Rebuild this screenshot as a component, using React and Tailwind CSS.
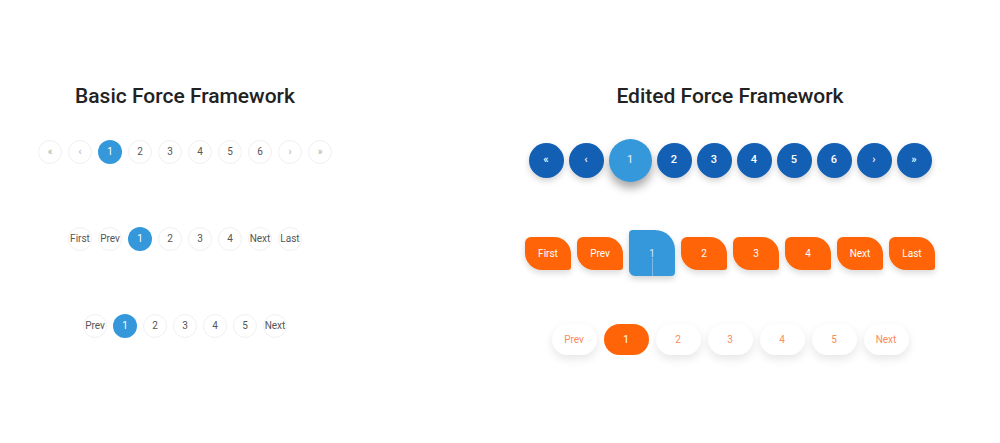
import React from 'react'

const font = { fontFamily: 'Roboto, "Liberation Sans", sans-serif' }

const BasicItem = ({ label, active, dim }) => (
  <div
    className={
      'w-[24px] h-[24px] rounded-full flex items-center justify-center text-[10px] leading-none whitespace-nowrap ' +
      (active
        ? 'bg-[#3498db] text-white'
        : 'border border-[#f0f0f0] bg-white ' + (dim ? 'text-[#aaa]' : 'text-[#555]'))
    }
  >
    {label}
  </div>
)

const BasicRow = ({ items, active }) => (
  <div className="flex items-center gap-[6px]">
    {items.map((it) => (
      <BasicItem key={it} label={it} active={it === active} dim={['«', '‹', '›', '»'].includes(it)} />
    ))}
  </div>
)

const BlueRow = () => {
  const items = ['«', '‹', '1', '2', '3', '4', '5', '6', '›', '»']
  return (
    <div className="flex items-center gap-[5px] h-[43px]">
      {items.map((it) =>
        it === '1' ? (
          <div
            key={it}
            className="w-[43px] h-[43px] rounded-full bg-[#3498db] text-[#e8f2fb] text-[11px] flex items-center justify-center shadow-[0_6px_10px_rgba(0,0,0,0.35)]"
          >
            {it}
          </div>
        ) : (
          <div
            key={it}
            className="w-[35px] h-[35px] rounded-full bg-[#135fb4] text-white text-[11px] font-medium flex items-center justify-center shadow-[0_3px_6px_rgba(0,0,0,0.18)]"
          >
            {it}
          </div>
        )
      )}
    </div>
  )
}

const LeafRow = () => {
  const items = ['First', 'Prev', '1', '2', '3', '4', 'Next', 'Last']
  return (
    <div className="flex items-center gap-[6px] h-[46px]">
      {items.map((it) =>
        it === '1' ? (
          <div
            key={it}
            className="relative w-[46px] h-[46px] bg-[#3498db] text-[#d6e9f8] text-[10px] flex items-center justify-center rounded-tl-[4px] rounded-tr-[20px] rounded-br-[4px] rounded-bl-[6px] shadow-[0_3px_6px_rgba(0,0,0,0.18)]"
          >
            {it}
            <span className="absolute left-1/2 top-[28px] bottom-0 w-px bg-[#7fbbe6]" />
          </div>
        ) : (
          <div
            key={it}
            className="w-[46px] h-[33px] bg-[#ff6508] text-white text-[10px] flex items-center justify-center rounded-tl-[6px] rounded-tr-[17px] rounded-br-[3px] rounded-bl-[17px] shadow-[0_3px_6px_rgba(0,0,0,0.15)]"
          >
            {it}
          </div>
        )
      )}
    </div>
  )
}

const PillRow = () => {
  const items = ['Prev', '1', '2', '3', '4', '5', 'Next']
  return (
    <div className="flex items-center gap-[7px] h-[31px]">
      {items.map((it) => (
        <div
          key={it}
          className={
            'w-[45px] h-[31px] rounded-full text-[10px] flex items-center justify-center ' +
            (it === '1'
              ? 'bg-[#ff6508] text-white'
              : 'bg-white text-[#fb8a5c] shadow-[0_4px_10px_rgba(0,0,0,0.1)]')
          }
        >
          {it}
        </div>
      ))}
    </div>
  )
}

export default function App() {
  return (
    <div className="w-[1000px] h-[443px] bg-white flex justify-between" style={font}>
      <div className="w-[370px] flex flex-col items-center pt-[83px]">
        <h1 className="text-[21px] leading-[26px] font-medium text-[#222]">Basic Force Framework</h1>
        <div className="mt-[31px]">
          <BasicRow items={['«', '‹', '1', '2', '3', '4', '5', '6', '›', '»']} active="1" />
        </div>
        <div className="mt-[63px]">
          <BasicRow items={['First', 'Prev', '1', '2', '3', '4', 'Next', 'Last']} active="1" />
        </div>
        <div className="mt-[63px]">
          <BasicRow items={['Prev', '1', '2', '3', '4', '5', 'Next']} active="1" />
        </div>
      </div>
      <div className="w-[540px] flex flex-col items-center pt-[83px]">
        <h1 className="text-[21px] leading-[26px] font-medium text-[#222]">Edited Force Framework</h1>
        <div className="mt-[30px]">
          <BlueRow />
        </div>
        <div className="mt-[48px]">
          <LeafRow />
        </div>
        <div className="mt-[48px]">
          <PillRow />
        </div>
      </div>
    </div>
  )
}
